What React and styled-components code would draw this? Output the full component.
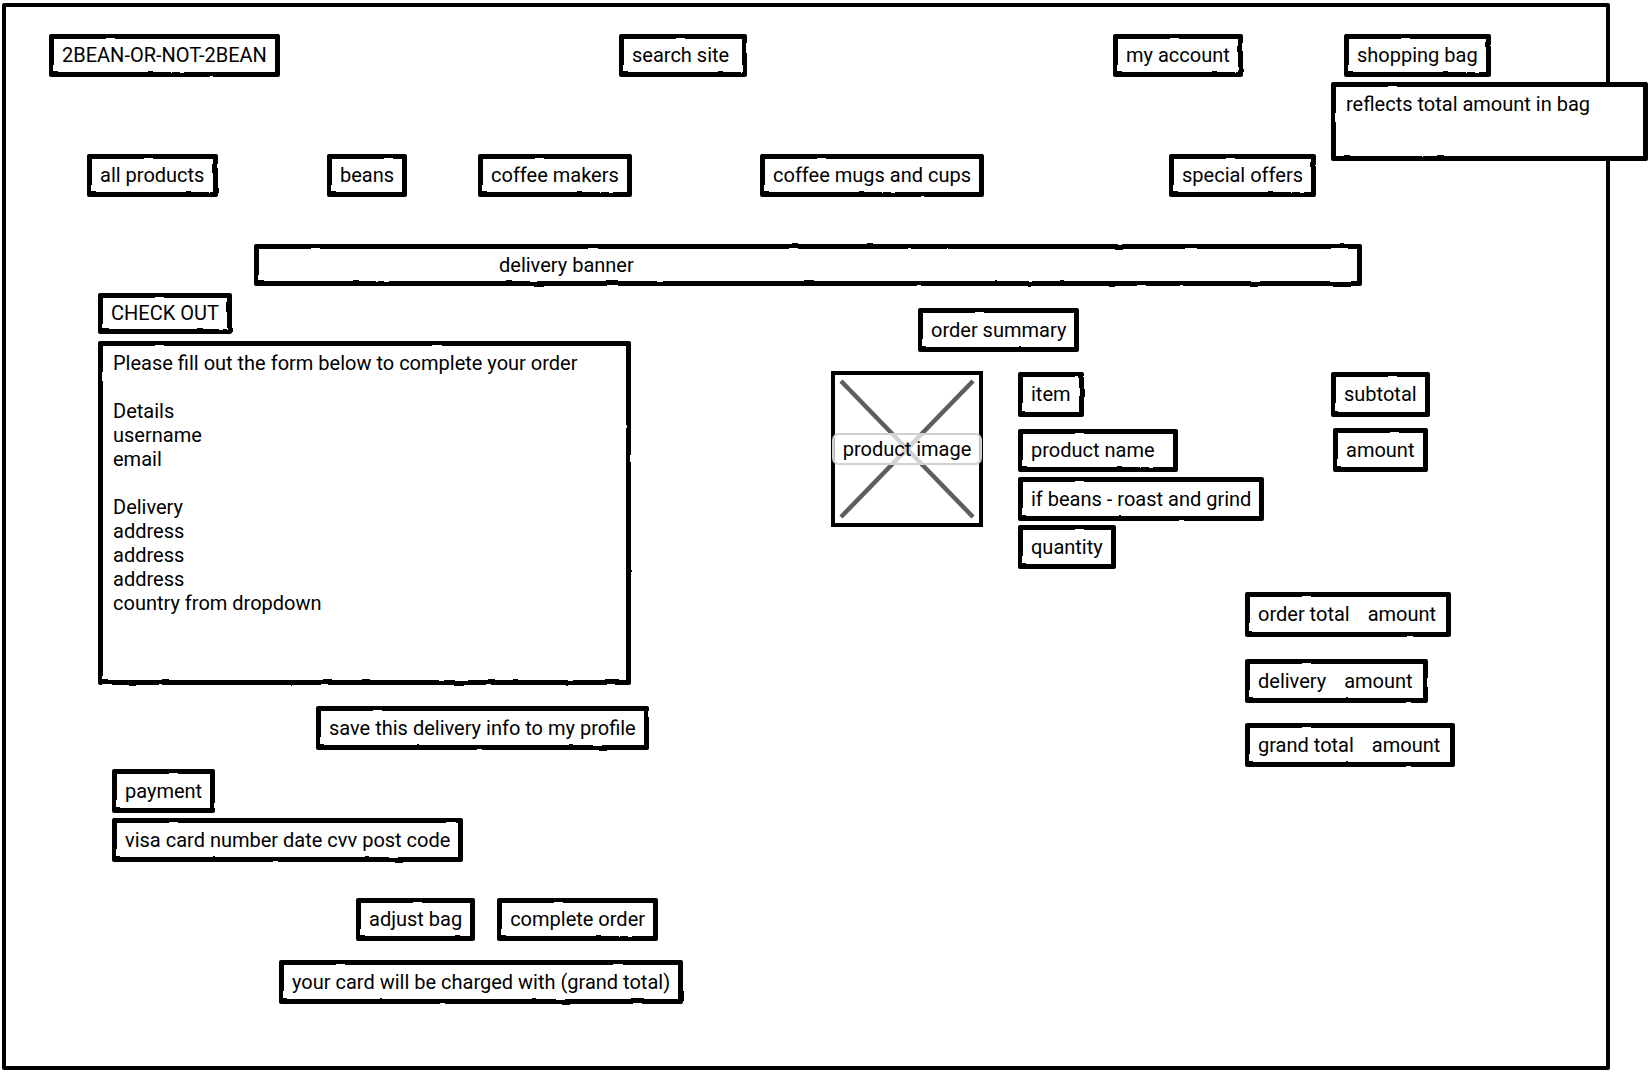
import React from 'react';
import styled, { createGlobalStyle, css } from 'styled-components';

const GlobalStyle = createGlobalStyle`
  html, body {
    margin: 0;
    padding: 0;
    background: #fff;
  }
  body {
    font-family: Roboto, "Liberation Sans", sans-serif;
    color: #000;
  }
`;

// hand-drawn outline, kept on a pseudo element so the text stays crisp
const rough = css`
  position: relative;
  &::before {
    content: '';
    position: absolute;
    inset: 0;
    border: 5px solid #000;
    border-radius: 2px;
    filter: url(#rough);
    pointer-events: none;
  }
`;

const Frame = styled.div`
  position: relative;
  box-sizing: border-box;
  width: 1608px;
  height: 1067px;
  margin: 3px 0 0 2px;
  border: 4px solid #000;
  border-radius: 2px;
  background: #fff;
  display: flex;
  flex-direction: column;
  align-items: flex-start;
`;

const Sketch = styled.div`
  ${rough};
  box-sizing: border-box;
  width: ${({ $w }) => ($w ? `${$w}px` : 'max-content')};
  height: ${({ $h }) => $h || 43}px;
  margin-top: ${({ $mt }) => $mt || 0}px;
  margin-left: ${({ $ml }) => $ml || 0}px;
  padding: 0 13px;
  background: #fff;
  font-size: 20px;
  line-height: ${({ $h }) => $h || 43}px;
  white-space: nowrap;
  justify-self: start;
  align-self: start;
`;

const TopBar = styled.div`
  display: grid;
  grid-template-columns: 570px 494px 231px auto;
  margin-top: 27px;
  padding-left: 43px;
`;

const NavBar = styled.div`
  display: grid;
  grid-template-columns: 240px 151px 282px 409px auto;
  margin-top: 77px;
  padding-left: 81px;
`;

const BagNote = styled.div`
  ${rough};
  position: absolute;
  z-index: 1;
  left: 1325px;
  top: 75px;
  box-sizing: border-box;
  width: 317px;
  height: 79px;
  padding: 10px 15px;
  background: #fff;
  font-size: 20px;
  line-height: 24px;
`;

const Banner = styled.div`
  ${rough};
  box-sizing: border-box;
  width: 1108px;
  height: 42px;
  margin: 47px 0 0 248px;
  padding-left: 245px;
  font-size: 20px;
  line-height: 42px;
`;

const Main = styled.div`
  display: grid;
  grid-template-columns: 733px 1fr;
  padding-left: 92px;
  width: 100%;
  box-sizing: border-box;
`;

const Column = styled.div`
  display: flex;
  flex-direction: column;
  align-items: flex-start;
  margin-left: ${({ $ml }) => $ml || 0}px;
  margin-top: ${({ $mt }) => $mt || 0}px;
  width: ${({ $w }) => ($w ? `${$w}px` : 'auto')};
`;

const FormBox = styled.div`
  ${rough};
  box-sizing: border-box;
  width: 533px;
  height: 344px;
  margin-top: 7px;
  padding: 10px 15px;
  font-size: 20px;
  line-height: 24px;
  white-space: pre-line;
`;

const ButtonRow = styled.div`
  display: flex;
  gap: 22px;
  margin-top: 36px;
  margin-left: 258px;
`;

const ItemRow = styled.div`
  display: flex;
  align-items: flex-start;
  margin-top: 19px;
`;

const ImageBox = styled.div`
  position: relative;
  box-sizing: border-box;
  width: 152px;
  height: 156px;
  border: 4px solid #000;
  background: #fff;

  svg {
    display: block;
  }
`;

const ImageLabel = styled.div`
  position: absolute;
  left: -3px;
  right: -3px;
  top: 58px;
  height: 32px;
  box-sizing: border-box;
  border: 2px solid #d0d0d0;
  border-radius: 7px;
  background: rgba(255, 255, 255, 0.72);
  font-size: 20px;
  line-height: 28px;
  text-align: center;
`;

const Pair = styled.span`
  display: inline-flex;
  gap: 18px;
`;

const FilterDefs = styled.svg`
  position: absolute;
  width: 0;
  height: 0;
`;

const formText = `Please fill out the form below to complete your order

Details
username
email

Delivery
address
address
address
country from dropdown`;

const ProductImage = () => (
  <ImageBox>
    <svg width="144" height="148" viewBox="0 0 144 148">
      <line x1="6" y1="6" x2="138" y2="142" stroke="#5e5e5e" strokeWidth="4.5" />
      <line x1="138" y1="6" x2="6" y2="142" stroke="#5e5e5e" strokeWidth="4.5" />
    </svg>
    <ImageLabel>product image</ImageLabel>
  </ImageBox>
);

const App = () => (
  <>
    <GlobalStyle />
    <FilterDefs aria-hidden="true">
      <filter id="rough" x="-5%" y="-20%" width="110%" height="140%">
        <feTurbulence type="fractalNoise" baseFrequency="0.04" numOctaves="2" seed="3" />
        <feDisplacementMap in="SourceGraphic" scale="2.2" />
      </filter>
    </FilterDefs>
    <Frame>
      <TopBar>
        <Sketch>2BEAN-OR-NOT-2BEAN</Sketch>
        <Sketch $w={128}>search site</Sketch>
        <Sketch>my account</Sketch>
        <Sketch>shopping bag</Sketch>
      </TopBar>
      <BagNote>reflects total amount in bag</BagNote>

      <NavBar>
        <Sketch $w={131}>all products</Sketch>
        <Sketch $w={80}>beans</Sketch>
        <Sketch>coffee makers</Sketch>
        <Sketch>coffee mugs and cups</Sketch>
        <Sketch>special offers</Sketch>
      </NavBar>

      <Banner>delivery banner</Banner>

      <Main>
        <Column>
          <Sketch $mt={7} $h={41}>CHECK OUT</Sketch>
          <FormBox>{formText}</FormBox>
          <Sketch $mt={21} $ml={218} $h={44}>save this delivery info to my profile</Sketch>
          <Sketch $mt={19} $ml={14} $h={44}>payment</Sketch>
          <Sketch $mt={5} $ml={14} $h={44}>visa card number date cvv post code</Sketch>
          <ButtonRow>
            <Sketch>adjust bag</Sketch>
            <Sketch>complete order</Sketch>
          </ButtonRow>
          <Sketch $mt={19} $ml={181} $h={44}>your card will be charged with (grand total)</Sketch>
        </Column>

        <Column>
          <Sketch $mt={22} $ml={87} $h={44}>order summary</Sketch>
          <ItemRow>
            <ProductImage />
            <Column $ml={35} $mt={1} $w={313}>
              <Sketch $h={45}>item</Sketch>
              <Sketch $mt={12} $w={160}>product name</Sketch>
              <Sketch $mt={5} $h={44}>if beans - roast and grind</Sketch>
              <Sketch $mt={4} $h={44}>quantity</Sketch>
            </Column>
            <Column $mt={1}>
              <Sketch $h={45} $w={99}>subtotal</Sketch>
              <Sketch $mt={11} $ml={2} $h={44} $w={95}>amount</Sketch>
            </Column>
          </ItemRow>
          <Column $ml={414} $mt={23}>
            <Sketch $h={45} $w={206}>
              <Pair>
                <span>order total</span>
                <span>amount</span>
              </Pair>
            </Sketch>
            <Sketch $mt={22} $h={44} $w={183}>
              <Pair>
                <span>delivery</span>
                <span>amount</span>
              </Pair>
            </Sketch>
            <Sketch $mt={20} $h={44} $w={210}>
              <Pair>
                <span>grand total</span>
                <span>amount</span>
              </Pair>
            </Sketch>
          </Column>
        </Column>
      </Main>
    </Frame>
  </>
);

export default App;
